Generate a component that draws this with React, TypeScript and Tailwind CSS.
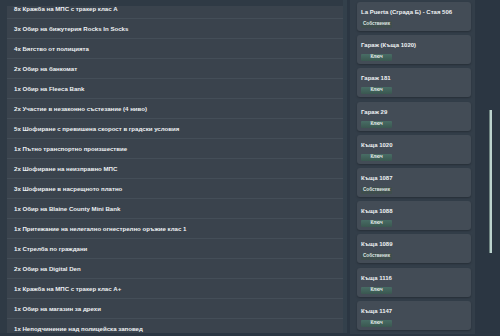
import React from 'react';

const CHARGES = [
    "8x Кражба на МПС с тракер клас А",
    "3x Обир на бижутерия Rocks In Socks",
    "4x Бягство от полицията",
    "2x Обир на банкомат",
    "1x Обир на Fleeca Bank",
    "2x Участие в незаконно състезание (4 ниво)",
    "5x Шофиране с превишена скорост в градски условия",
    "1x Пътно транспортно произшествие",
    "2x Шофиране на неизправно МПС",
    "3x Шофиране в насрещното платно",
    "1x Обир на Blaine County Mini Bank",
    "1x Притежание на нелегално огнестрелно оръжие клас 1",
    "1x Стрелба по граждани",
    "2x Обир на Digital Den",
    "1x Кражба на МПС с тракер клас A+",
    "1x Обир на магазин за дрехи",
    "1x Неподчинение над полицейска заповед",
];

type Property = { name: string; owner: boolean };

const PROPERTIES: Property[] = [
    { name: "La Puerta (Сграда Б) - Стая 506", owner: true },
    { name: "Гараж (Къща 1020)", owner: false },
    { name: "Гараж 181", owner: false },
    { name: "Гараж 29", owner: false },
    { name: "Къща 1020", owner: false },
    { name: "Къща 1087", owner: true },
    { name: "Къща 1088", owner: false },
    { name: "Къща 1089", owner: true },
    { name: "Къща 1116", owner: false },
    { name: "Къща 1147", owner: false },
];

const Badge: React.FC<{ owner: boolean }> = ({ owner }) => (
    <span
        className={
            owner
                ? "flex items-center justify-center w-[31px] h-[7px] rounded-[1px] bg-[#3f4e4d] text-[4.6px] font-bold text-[#dfe6e4]"
                : "flex items-center justify-center w-[31px] h-[7px] rounded-[1px] bg-gradient-to-b from-[#486d65] to-[#3a5750] text-[4.6px] font-bold text-[#e6efec]"
        }
    >
        {owner ? "Собственик" : "Ключ"}
    </span>
);

export default function App() {
    return (
        <div
            className="w-[500px] h-[336px] bg-[#2b3642] flex overflow-hidden text-[#eef1f3]"
            style={{ fontFamily: '"Liberation Sans", Arial, sans-serif' }}
        >
            {/* Charges list */}
            <div className="w-[343px] h-[333px] pl-[7px] pt-[6px] bg-[#2f3a45] shrink-0">
                <div className="h-full overflow-hidden bg-[#3a434d]">
                    <div className="-mt-[7px] flex flex-col">
                        {CHARGES.map((c) => (
                            <div
                                key={c}
                                className="h-[20px] shrink-0 flex items-center pl-[7px] border-b border-[#444e58] text-[6.1px] font-bold"
                            >
                                {c}
                            </div>
                        ))}
                    </div>
                </div>
            </div>
            <div className="w-[4px] h-[333px] bg-[#33404b] shrink-0" />

            {/* Properties */}
            <div className="ml-[3px] w-[125px] h-[334px] bg-[#333e49] pl-[7px] pr-[4px] pt-[2px] flex flex-col gap-[4.2px] shrink-0">
                {PROPERTIES.map((p) => (
                    <div
                        key={p.name}
                        className="h-[29px] shrink-0 rounded-[3px] bg-[#434c56] shadow-[0_1px_2px_rgba(0,0,0,0.25)] pl-[4px] pt-[6px] flex flex-col gap-[5px]"
                    >
                        <div className="text-[6px] font-bold leading-[8px]">{p.name}</div>
                        <Badge owner={p.owner} />
                    </div>
                ))}
            </div>

            {/* Page scrollbar */}
            <div className="flex-1">
                <div className="ml-[14px] mt-[110px] w-[3px] h-[143px] bg-[#bcd3ce] border-l border-[#6f8582]" />
            </div>
        </div>
    );
}
